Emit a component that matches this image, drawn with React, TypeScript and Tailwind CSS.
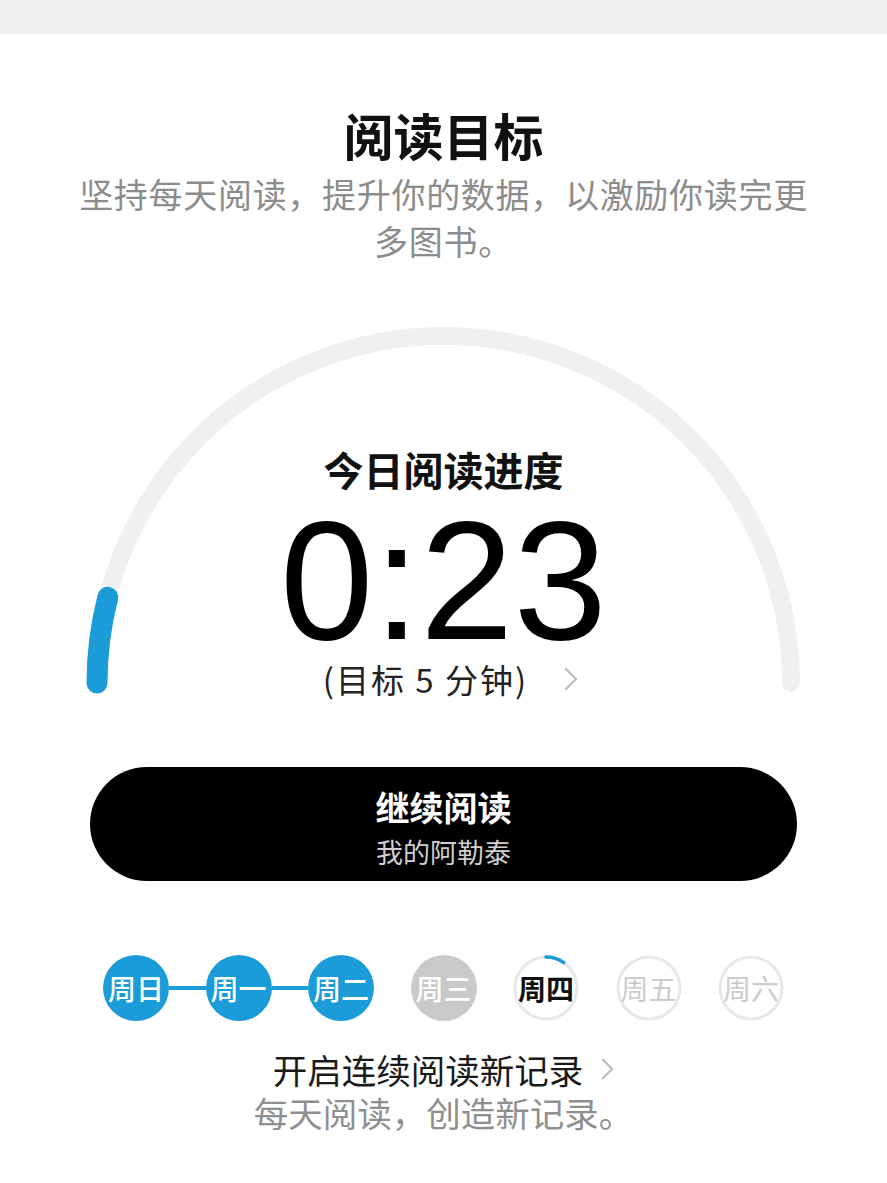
import React from 'react'

const cjk = { fontFamily: '"Noto Sans CJK SC", "Noto Sans", sans-serif' }
const num = { fontFamily: '"Liberation Sans", Arial, sans-serif' }

function Chevron({ className }: { className?: string }) {
  return (
    <svg viewBox="0 0 14 24" className={className} fill="none" stroke="#bdbdbd" strokeWidth="2.4" strokeLinecap="round" strokeLinejoin="round">
      <polyline points="2,2 12,12 2,22" />
    </svg>
  )
}

type Day = { label: string; state: 'done' | 'missed' | 'today' | 'future' }

const days: Day[] = [
  { label: '周日', state: 'done' },
  { label: '周一', state: 'done' },
  { label: '周二', state: 'done' },
  { label: '周三', state: 'missed' },
  { label: '周四', state: 'today' },
  { label: '周五', state: 'future' },
  { label: '周六', state: 'future' },
]

function DayCircle({ day }: { day: Day }) {
  if (day.state === 'done') {
    return (
      <div className="w-[66px] h-[66px] rounded-full bg-[#1b9bd7] flex items-center justify-center text-white text-[28px] font-medium shrink-0">
        {day.label}
      </div>
    )
  }
  if (day.state === 'missed') {
    return (
      <div className="w-[66px] h-[66px] rounded-full bg-[#c9c9c9] flex items-center justify-center text-white text-[28px] font-medium shrink-0">
        {day.label}
      </div>
    )
  }
  const today = day.state === 'today'
  return (
    <div className="relative w-[66px] h-[66px] shrink-0 flex items-center justify-center">
      <svg viewBox="0 0 66 66" className="absolute inset-0 w-[66px] h-[66px]">
        <circle cx="33" cy="33" r="31" fill="none" stroke="#e8e8e8" strokeWidth="3" />
        {today && (
          <path d="M 33 2 A 31 31 0 0 1 50.8 7.6" fill="none" stroke="#1b9bd7" strokeWidth="3.5" strokeLinecap="round" />
        )}
      </svg>
      <span className={today ? 'relative text-[28px] font-bold text-[#111]' : 'relative text-[28px] text-[#cccccc]'}>
        {day.label}
      </span>
    </div>
  )
}

export default function App() {
  return (
    <div className="w-[887px] h-[1183px] bg-white overflow-hidden" style={cjk}>
      <div className="h-[34px] bg-[#efefef]" />

      <div className="flex flex-col items-center">
        <h1 className="mt-[72px] text-[50px] leading-[56px] font-bold text-[#111]">阅读目标</h1>
        <p className="mt-[8px] w-[750px] text-center text-[34px] tracking-[0.7px] leading-[47px] text-[#8c8c8c]">
          坚持每天阅读，提升你的数据，以激励你读完更多图书。
        </p>
      </div>

      {/* progress gauge */}
      <div className="relative mt-[35px] h-[420px]">
        <svg viewBox="0 0 887 420" className="absolute inset-0 w-[887px] h-[420px]">
          <path d="M 97 384 A 347 347 0 0 1 791 384" fill="none" stroke="#f0f0f3" strokeWidth="18" strokeLinecap="round" />
          <path d="M 97 384 A 347 347 0 0 1 107.8 298.3" fill="none" stroke="#1b9bd7" strokeWidth="21" strokeLinecap="round" />
        </svg>
        <div className="relative flex flex-col items-center pt-[146px]">
          <div className="text-[40px] leading-[49px] font-bold text-[#111]">今日阅读进度</div>
          <div className="mt-[12px] text-[168px] leading-[150px] text-black" style={num}>0:23</div>
          <div className="mt-[2px] flex items-center text-[33px] leading-[42px] text-[#222]">
            <span className="ml-[14px] tracking-[2px]">(目标 5 分钟)</span>
            <Chevron className="ml-[36px] w-[14px] h-[24px]" />
          </div>
        </div>
      </div>

      {/* continue button */}
      <div className="mt-[48px] mx-[90px] h-[114px] rounded-[57px] bg-black flex flex-col items-center pt-[20px]">
        <div className="text-[34px] leading-[40px] font-bold text-white">继续阅读</div>
        <div className="mt-[7px] text-[27px] leading-[36px] text-[#cfcfcf]">我的阿勒泰</div>
      </div>

      {/* week streak */}
      <div className="mt-[74px] mx-[103px] flex items-center">
        {days.map((d, i) => (
          <React.Fragment key={d.label}>
            {i > 0 && (
              <div className={i <= 2 ? 'flex-1 h-[4px] bg-[#1b9bd7]' : 'flex-1 h-[4px]'} />
            )}
            <DayCircle day={d} />
          </React.Fragment>
        ))}
      </div>

      <div className="mt-[26px] flex flex-col items-center">
        <div className="flex items-center text-[34.5px] leading-[44px] text-[#1a1a1a]">
          <span>开启连续阅读新记录</span>
          <Chevron className="ml-[18px] w-[13px] h-[24px]" />
        </div>
        <div className="text-[34.5px] leading-[42px] text-[#8f8f8f]">每天阅读，创造新记录。</div>
      </div>
    </div>
  )
}
